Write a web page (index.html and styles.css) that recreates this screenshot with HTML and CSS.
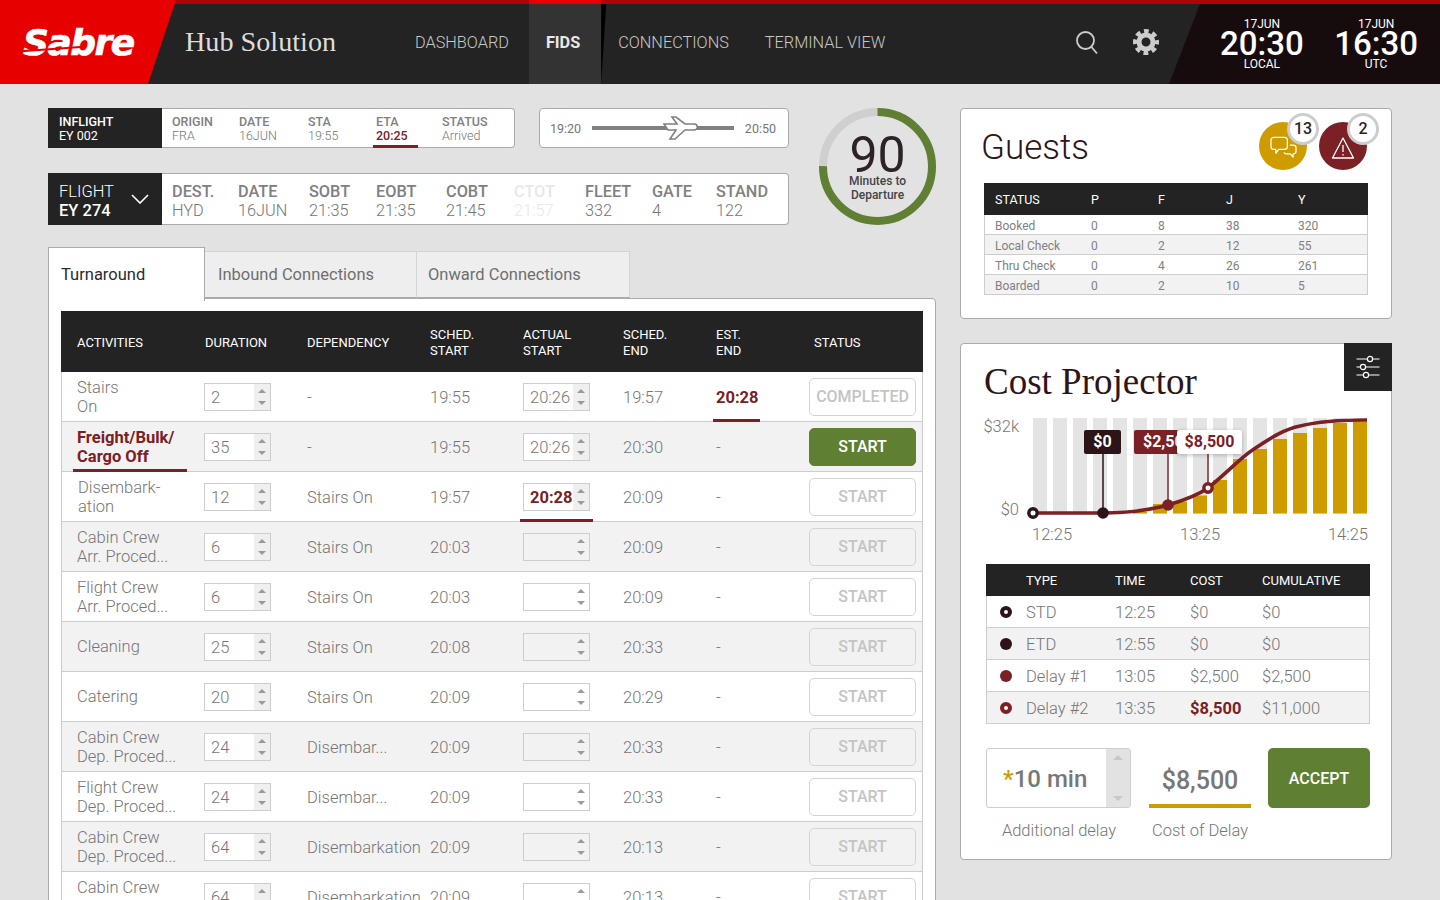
FILE: index.html
```html
<!DOCTYPE html>
<html lang="en">

<head>
    <meta charset="UTF-8">
    <meta name="viewport" content="width=device-width, initial-scale=1.0">
    <title>Hub Solution</title>
    <link rel="stylesheet" href="styles.css">
</head>

<body>
    <header class="topbar">
        <div class="logo"><span class="logo-text">Sabre</span></div>
        <div class="app-title">Hub Solution</div>
        <nav class="nav">
            <a class="nav-item">DASHBOARD</a>
            <a class="nav-item active">FIDS</a>
            <a class="nav-item">CONNECTIONS</a>
            <a class="nav-item">TERMINAL VIEW</a>
        </nav>
        <div class="tools">
            <svg class="icon-search" viewBox="0 0 26 26" width="26" height="26" fill="none" stroke="#ccc" stroke-width="1.8">
                <circle cx="11.5" cy="11.5" r="8.5"></circle>
                <path d="M17.5 18 L23 24.5"></path>
            </svg>
            <svg class="icon-gear" viewBox="0 0 26 26" width="26" height="26" fill="none" stroke="#ccc">
                <circle cx="13" cy="13" r="7" stroke-width="5"></circle>
                <circle cx="13" cy="13" r="10.5" stroke-width="5" stroke-dasharray="4.6 3.65" stroke-dashoffset="2.3"></circle>
            </svg>
        </div>
        <div class="clocks">
            <div class="clock"><span>17JUN</span><strong>20:30</strong><span>LOCAL</span></div>
            <div class="clock"><span>17JUN</span><strong>16:30</strong><span>UTC</span></div>
        </div>
    </header>

    <main class="page">
        <section class="left">
            <div class="summary">
                <div class="flights">
                    <div class="flight-line">
                        <div class="flight-card small">
                            <div class="flight-id"><b>INFLIGHT</b><span>EY 002</span></div>
                            <div class="fields inbound">
                                <div><b>ORIGIN</b><span>FRA</span></div>
                                <div><b>DATE</b><span>16JUN</span></div>
                                <div><b>STA</b><span>19:55</span></div>
                                <div class="marked"><b>ETA</b><span>20:25</span></div>
                                <div><b>STATUS</b><span>Arrived</span></div>
                            </div>
                        </div>
                        <div class="timeline">
                            <span>19:20</span>
                            <div class="track">
                                <svg class="plane" viewBox="0 0 36 24" width="36" height="24" fill="#fff" stroke="#808080" stroke-width="1.6">
                                    <path d="M1 8 H14 L9 1 H13 L22 8 H31 C35.5 8 35.5 14 31 14 H22 L12 23 H7 L13 14 H5 Z"></path>
                                </svg>
                            </div>
                            <span>20:50</span>
                        </div>
                    </div>
                    <div class="flight-card big">
                        <div class="flight-id">
                            <div><span>FLIGHT</span><b>EY 274</b></div>
                            <svg viewBox="0 0 18 10" width="18" height="10" fill="none" stroke="#fff" stroke-width="1.6">
                                <path d="M1 1 L9 9 L17 1"></path>
                            </svg>
                        </div>
                        <div class="fields outbound">
                            <div><b>DEST.</b><span>HYD</span></div>
                            <div><b>DATE</b><span>16JUN</span></div>
                            <div><b>SOBT</b><span>21:35</span></div>
                            <div><b>EOBT</b><span>21:35</span></div>
                            <div><b>COBT</b><span>21:45</span></div>
                            <div class="faded"><b>CTOT</b><span>21:57</span></div>
                            <div><b>FLEET</b><span>332</span></div>
                            <div><b>GATE</b><span>4</span></div>
                            <div><b>STAND</b><span>122</span></div>
                        </div>
                    </div>
                </div>
                <div class="gauge">
                    <svg viewBox="0 0 117 117" width="117" height="117" fill="none" stroke-width="8">
                        <circle cx="58.5" cy="58.5" r="54.5" stroke="#cfcfcf"></circle>
                        <circle cx="58.5" cy="58.5" r="54.5" stroke="#5f7f33" stroke-dasharray="256.8 342.4" transform="rotate(-90 58.5 58.5)"></circle>
                    </svg>
                    <div class="gauge-text">
                        <strong>90</strong>
                        <span>Minutes to<br>Departure</span>
                    </div>
                </div>
            </div>

            <div class="tabs">
                <div class="tab active">Turnaround</div>
                <div class="tab">Inbound Connections</div>
                <div class="tab">Onward Connections</div>
            </div>

            <div class="tab-panel">
                <table class="activities">
                    <colgroup>
                        <col class="c-name">
                        <col class="c-dur">
                        <col class="c-dep">
                        <col class="c-sched">
                        <col class="c-act">
                        <col class="c-end">
                        <col class="c-est">
                        <col class="c-status">
                    </colgroup>
                    <thead>
                        <tr>
                            <th class="first">ACTIVITIES</th>
                            <th>DURATION</th>
                            <th>DEPENDENCY</th>
                            <th>SCHED.<br>START</th>
                            <th>ACTUAL<br>START</th>
                            <th>SCHED.<br>END</th>
                            <th>EST.<br>END</th>
                            <th class="last">STATUS</th>
                        </tr>
                    </thead>
                    <tbody>
                        <tr>
                            <td class="first">Stairs<br>On</td>
                            <td><div class="spin"><span>2</span><i></i></div></td>
                            <td>-</td>
                            <td>19:55</td>
                            <td><div class="spin"><span>20:26</span><i></i></div></td>
                            <td>19:57</td>
                            <td class="late underline-est">20:28</td>
                            <td><button class="btn">COMPLETED</button></td>
                        </tr>
                        <tr>
                            <td class="first late underline-name">Freight/Bulk/<br>Cargo Off</td>
                            <td><div class="spin"><span>35</span><i></i></div></td>
                            <td>-</td>
                            <td>19:55</td>
                            <td><div class="spin"><span>20:26</span><i></i></div></td>
                            <td>20:30</td>
                            <td>-</td>
                            <td><button class="btn go">START</button></td>
                        </tr>
                        <tr>
                            <td class="first nudge">Disembark-<br>ation</td>
                            <td><div class="spin"><span>12</span><i></i></div></td>
                            <td>Stairs On</td>
                            <td>19:57</td>
                            <td class="underline-act"><div class="spin"><span class="late">20:28</span><i></i></div></td>
                            <td>20:09</td>
                            <td>-</td>
                            <td><button class="btn">START</button></td>
                        </tr>
                        <tr>
                            <td class="first">Cabin Crew<br>Arr. Proced...</td>
                            <td><div class="spin"><span>6</span><i></i></div></td>
                            <td>Stairs On</td>
                            <td>20:03</td>
                            <td><div class="spin empty"><span></span><i></i></div></td>
                            <td>20:09</td>
                            <td>-</td>
                            <td><button class="btn">START</button></td>
                        </tr>
                        <tr>
                            <td class="first">Flight Crew<br>Arr. Proced...</td>
                            <td><div class="spin"><span>6</span><i></i></div></td>
                            <td>Stairs On</td>
                            <td>20:03</td>
                            <td><div class="spin empty"><span></span><i></i></div></td>
                            <td>20:09</td>
                            <td>-</td>
                            <td><button class="btn">START</button></td>
                        </tr>
                        <tr>
                            <td class="first">Cleaning</td>
                            <td><div class="spin"><span>25</span><i></i></div></td>
                            <td>Stairs On</td>
                            <td>20:08</td>
                            <td><div class="spin empty"><span></span><i></i></div></td>
                            <td>20:33</td>
                            <td>-</td>
                            <td><button class="btn">START</button></td>
                        </tr>
                        <tr>
                            <td class="first">Catering</td>
                            <td><div class="spin"><span>20</span><i></i></div></td>
                            <td>Stairs On</td>
                            <td>20:09</td>
                            <td><div class="spin empty"><span></span><i></i></div></td>
                            <td>20:29</td>
                            <td>-</td>
                            <td><button class="btn">START</button></td>
                        </tr>
                        <tr>
                            <td class="first">Cabin Crew<br>Dep. Proced...</td>
                            <td><div class="spin"><span>24</span><i></i></div></td>
                            <td>Disembar...</td>
                            <td>20:09</td>
                            <td><div class="spin empty"><span></span><i></i></div></td>
                            <td>20:33</td>
                            <td>-</td>
                            <td><button class="btn">START</button></td>
                        </tr>
                        <tr>
                            <td class="first">Flight Crew<br>Dep. Proced...</td>
                            <td><div class="spin"><span>24</span><i></i></div></td>
                            <td>Disembar...</td>
                            <td>20:09</td>
                            <td><div class="spin empty"><span></span><i></i></div></td>
                            <td>20:33</td>
                            <td>-</td>
                            <td><button class="btn">START</button></td>
                        </tr>
                        <tr>
                            <td class="first">Cabin Crew<br>Dep. Proced...</td>
                            <td><div class="spin"><span>64</span><i></i></div></td>
                            <td>Disembarkation</td>
                            <td>20:09</td>
                            <td><div class="spin empty"><span></span><i></i></div></td>
                            <td>20:13</td>
                            <td>-</td>
                            <td><button class="btn">START</button></td>
                        </tr>
                        <tr>
                            <td class="first">Cabin Crew<br>Dep. Proced...</td>
                            <td><div class="spin"><span>64</span><i></i></div></td>
                            <td>Disembarkation</td>
                            <td>20:09</td>
                            <td><div class="spin empty"><span></span><i></i></div></td>
                            <td>20:13</td>
                            <td>-</td>
                            <td><button class="btn">START</button></td>
                        </tr>
                    </tbody>
                </table>
            </div>
        </section>

        <aside class="right">
            <section class="panel guests">
                <div class="guests-head">
                    <h2>Guests</h2>
                    <div class="alerts">
                        <div class="alert gold">
                            <svg viewBox="0 0 28 26" width="27" height="25" fill="none" stroke="#fff" stroke-width="1.3" stroke-linejoin="round">
                                <path d="M4 1.5 H15 Q18 1.5 18 4.5 V11 Q18 14 15 14 H9 L6 18 V14 H4 Q1 14 1 11 V4.5 Q1 1.5 4 1.5 Z"></path>
                                <path d="M20.5 9.5 H24 Q27 9.5 27 12 V16 Q27 18.5 24 18.5 V22 L21 18.5 H17 Q15 18.5 14.5 17"></path>
                            </svg>
                            <span class="count">13</span>
                        </div>
                        <div class="alert red">
                            <svg viewBox="0 0 24 24" width="24" height="24" fill="none" stroke="#fff" stroke-width="1.3" stroke-linejoin="round">
                                <path d="M12 2 L22.5 22 H1.5 Z"></path>
                                <path d="M12 9 V16 M12 18 V19.5"></path>
                            </svg>
                            <span class="count">2</span>
                        </div>
                    </div>
                </div>
                <table class="guest-table">
                    <thead>
                        <tr><th>STATUS</th><th>P</th><th>F</th><th>J</th><th>Y</th></tr>
                    </thead>
                    <tbody>
                        <tr><td>Booked</td><td>0</td><td>8</td><td>38</td><td>320</td></tr>
                        <tr><td>Local Check</td><td>0</td><td>2</td><td>12</td><td>55</td></tr>
                        <tr><td>Thru Check</td><td>0</td><td>4</td><td>26</td><td>261</td></tr>
                        <tr><td>Boarded</td><td>0</td><td>2</td><td>10</td><td>5</td></tr>
                    </tbody>
                </table>
            </section>

            <section class="panel cost">
                <h2 class="cost-title">Cost Projector</h2>
                <div class="filter-btn">
                    <svg viewBox="0 0 24 24" width="24" height="24" fill="#222" stroke="#fff" stroke-width="1.2">
                        <path d="M0.5 4 H23.5 M0.5 12 H23.5 M0.5 20 H23.5"></path>
                        <circle cx="14" cy="4" r="2.6"></circle>
                        <circle cx="7" cy="12" r="2.6"></circle>
                        <circle cx="10" cy="20" r="2.6"></circle>
                    </svg>
                </div>
                <svg class="chart" viewBox="961 410 430 140" width="430" height="140">
                    <g fill="#e4e4e4">
                        <rect x="1033" y="418" width="14" height="95.5"></rect>
                        <rect x="1053" y="418" width="14" height="95.5"></rect>
                        <rect x="1073" y="418" width="14" height="95.5"></rect>
                        <rect x="1093" y="418" width="14" height="95.5"></rect>
                        <rect x="1113" y="418" width="14" height="95.5"></rect>
                        <rect x="1133" y="418" width="14" height="95.5"></rect>
                        <rect x="1153" y="418" width="14" height="95.5"></rect>
                        <rect x="1173" y="418" width="14" height="95.5"></rect>
                        <rect x="1193" y="418" width="14" height="95.5"></rect>
                        <rect x="1213" y="418" width="14" height="95.5"></rect>
                        <rect x="1233" y="418" width="14" height="95.5"></rect>
                        <rect x="1253" y="418" width="14" height="95.5"></rect>
                        <rect x="1273" y="418" width="14" height="95.5"></rect>
                        <rect x="1293" y="418" width="14" height="95.5"></rect>
                        <rect x="1313" y="418" width="14" height="95.5"></rect>
                        <rect x="1333" y="418" width="14" height="95.5"></rect>
                        <rect x="1353" y="418" width="14" height="95.5"></rect>
                    </g>
                    <g fill="#cf9c00">
                        <rect x="1133" y="512" width="14" height="1.5"></rect>
                        <rect x="1153" y="504" width="14" height="9.5"></rect>
                        <rect x="1173" y="501.5" width="14" height="12"></rect>
                        <rect x="1193" y="495.5" width="14" height="18"></rect>
                        <rect x="1213" y="480" width="14" height="33.5"></rect>
                        <rect x="1233" y="459" width="14" height="54.5"></rect>
                        <rect x="1253" y="449" width="14" height="65"></rect>
                        <rect x="1273" y="439" width="14" height="74.5"></rect>
                        <rect x="1293" y="433" width="14" height="80.5"></rect>
                        <rect x="1313" y="428" width="14" height="85.5"></rect>
                        <rect x="1333" y="423" width="14" height="90.5"></rect>
                        <rect x="1353" y="422" width="14" height="91.5"></rect>
                    </g>
                    <path d="M1033 513 H1103 C1130 513 1150 510 1168 505 C1185 500 1198 495 1208 488 C1228 472 1240 458 1254 449 C1272 437 1285 429 1300 426 C1320 421 1345 420 1367 420" fill="none" stroke="#7b2024" stroke-width="3.6"></path>
                    <path d="M1103 440 V513" stroke="#2d1419" stroke-width="1.5"></path>
                    <path d="M1168 440 V505" stroke="#7b2024" stroke-width="1.5"></path>
                    <path d="M1208 440 V488" stroke="#7b2024" stroke-width="1.5"></path>
                    <rect x="1084" y="430" width="37" height="24" rx="2" fill="#2d1419"></rect>
                    <text x="1102.5" y="447" class="tag" fill="#fff">$0</text>
                    <rect x="1134" y="430" width="60" height="24" rx="2" fill="#7b2024"></rect>
                    <text x="1143" y="447" class="tag-left" fill="#fff">$2,500</text>
                    <rect class="tag-shadow" x="1177" y="430" width="65" height="24" rx="2" fill="#fff"></rect>
                    <text x="1209.5" y="447" class="tag" fill="#7b2024">$8,500</text>
                    <circle cx="1033" cy="513" r="4.2" fill="#fff" stroke="#2d1419" stroke-width="3.4"></circle>
                    <circle cx="1103" cy="513" r="5.8" fill="#2d1419"></circle>
                    <circle cx="1168" cy="505" r="5.8" fill="#7b2024"></circle>
                    <circle cx="1208" cy="488" r="4.2" fill="#fff" stroke="#7b2024" stroke-width="3.4"></circle>
                    <text x="1019" y="432" class="axis end">$32k</text>
                    <text x="1019" y="515" class="axis end">$0</text>
                    <text x="1032" y="540" class="axis">12:25</text>
                    <text x="1180" y="540" class="axis">13:25</text>
                    <text x="1368" y="540" class="axis end">14:25</text>
                </svg>
                <table class="cost-table">
                    <thead>
                        <tr><th></th><th>TYPE</th><th>TIME</th><th>COST</th><th>CUMULATIVE</th></tr>
                    </thead>
                    <tbody>
                        <tr><td><span class="dot dark open"></span></td><td>STD</td><td>12:25</td><td>$0</td><td>$0</td></tr>
                        <tr><td><span class="dot dark"></span></td><td>ETD</td><td>12:55</td><td>$0</td><td>$0</td></tr>
                        <tr><td><span class="dot wine"></span></td><td>Delay #1</td><td>13:05</td><td>$2,500</td><td>$2,500</td></tr>
                        <tr><td><span class="dot wine open"></span></td><td>Delay #2</td><td>13:35</td><td class="late">$8,500</td><td>$11,000</td></tr>
                    </tbody>
                </table>
                <div class="delay-form">
                    <div class="delay-input">
                        <div class="delay-value"><em>*</em>10 min</div>
                        <div class="delay-spin"></div>
                    </div>
                    <div class="delay-cost">$8,500</div>
                    <button class="accept">ACCEPT</button>
                    <div class="delay-label">Additional delay</div>
                    <div class="delay-label">Cost of Delay</div>
                </div>
            </section>
        </aside>
    </main>
</body>

</html>
```

FILE: styles.css
```css
* {
    box-sizing: border-box;
}

html,
body {
    height: 900px;
    overflow: hidden;
}

body {
    margin: 0;
    background-color: #e2e2e2;
    font-family: Roboto, "Liberation Sans", sans-serif;
    font-weight: 300;
    color: #757575;
}

/* header */
.topbar {
    display: flex;
    height: 84px;
    background-color: #232323;
    box-shadow: inset 0 4px 0 #ad0505;
}

.logo {
    display: flex;
    align-items: center;
    width: 176px;
    padding-left: 23px;
    background-color: #e60000;
    clip-path: polygon(0 0, 100% 0, 148px 100%, 0 100%);
}

.logo-text {
    position: relative;
    font-family: "DejaVu Sans", sans-serif;
    font-size: 36px;
    font-weight: 700;
    font-style: italic;
    letter-spacing: -1.5px;
    color: #fff;
    -webkit-text-stroke: 0.7px #fff;
}

.logo-text::after {
    content: "";
    position: absolute;
    left: -2px;
    right: 50px;
    top: 26px;
    height: 2px;
    background-color: #e60000;
    transform: rotate(-4deg);
}

.app-title {
    align-self: center;
    margin-left: 9px;
    width: 212px;
    font-family: "Liberation Serif", serif;
    font-size: 28.2px;
    color: #ddd;
    white-space: nowrap;
}

.nav {
    display: flex;
}

.nav-item {
    position: relative;
    display: flex;
    align-items: center;
    padding: 0 18px;
    font-size: 16.3px;
    color: #c8c8c8;
}

.nav-item:first-child {
    padding-right: 19px;
}

.nav-item.active {
    margin-left: 1px;
    padding: 0 21px 0 17px;
    font-weight: 700;
    color: #e8e8e8;
    background-color: #333;
    box-shadow: inset 0 4px 0 #e60000;
}

.nav-item.active + .nav-item {
    padding-left: 17px;
}

.nav-item.active::after {
    content: "";
    position: absolute;
    left: 100%;
    top: 4px;
    width: 5px;
    height: 80px;
    background-color: #000;
    clip-path: polygon(0 0, 100% 0, 0 100%);
}

.tools {
    display: flex;
    align-items: center;
    gap: 33px;
    margin-left: auto;
    padding-right: 10px;
}

.icon-search,
.icon-gear {
    display: block;
}

.clocks {
    display: flex;
    justify-content: space-between;
    width: 271px;
    margin-top: 4px;
    padding: 0 22px 0 51px;
    background-color: #160c0d;
    clip-path: polygon(31px 0, 100% 0, 100% 100%, 0 100%);
}

.clock {
    display: flex;
    flex-direction: column;
    align-items: center;
    padding-top: 13px;
    color: #fff;
    font-size: 12px;
    font-weight: 400;
    line-height: 14px;
}

.clock strong {
    font-size: 33px;
    font-weight: 500;
    line-height: 26px;
}

/* page */
.page {
    display: flex;
    gap: 24px;
    padding: 24px 48px 0;
}

.left {
    width: 888px;
}

.right {
    width: 432px;
}

.summary {
    display: flex;
    gap: 30px;
}

.flights {
    display: flex;
    flex-direction: column;
    gap: 25px;
    width: 741px;
}

.flight-line {
    display: flex;
    gap: 24px;
}

.flight-card {
    display: flex;
    background-color: #fff;
    border: 1px solid #aaa;
    border-left: none;
    border-radius: 0 4px 4px 0;
}

.flight-card.small {
    width: 467px;
    height: 40px;
}

.flight-card.big {
    width: 741px;
    height: 52px;
}

.flight-id {
    flex: none;
    width: 114px;
    margin: -1px 0;
    background-color: #232323;
    color: #fff;
}

.small .flight-id {
    display: flex;
    flex-direction: column;
    justify-content: center;
    padding: 2px 0 0 11px;
    font-size: 12.5px;
    line-height: 14px;
    font-weight: 400;
}

.small .flight-id b {
    font-weight: 500;
}

.big .flight-id {
    display: flex;
    align-items: center;
    justify-content: space-between;
    padding: 4px 13px 0 11px;
    font-size: 16.5px;
    line-height: 19px;
}

.big .flight-id svg {
    margin-top: -4px;
}

.big .flight-id div {
    display: flex;
    flex-direction: column;
}

.big .flight-id b {
    font-weight: 500;
}

.fields {
    display: grid;
    align-items: center;
    padding-left: 10px;
}

.fields > div {
    display: flex;
    flex-direction: column;
}

.fields b {
    font-weight: 500;
    color: #808080;
}

.inbound {
    grid-template-columns: 67px 69px 68px 66px auto;
    padding-top: 2px;
    font-size: 12.5px;
    line-height: 14px;
}

.outbound {
    grid-template-columns: 66px 71px 67px 70px 68px 71px 67px 64px auto;
    padding-top: 4px;
    font-size: 16.3px;
    line-height: 19px;
}

.marked {
    position: relative;
}

.marked span {
    font-weight: 500;
    color: #7b2024;
}

.marked::after {
    content: "";
    position: absolute;
    left: -3px;
    bottom: -5px;
    width: 45px;
    height: 3px;
    background-color: #7b2024;
}

.faded b,
.faded span {
    color: #e8e8e8;
}

.timeline {
    display: flex;
    align-items: center;
    gap: 11px;
    width: 250px;
    height: 40px;
    padding: 0 12px 0 10px;
    background-color: #fff;
    border: 1px solid #aaa;
    border-radius: 4px;
    font-size: 12.5px;
    font-weight: 400;
}

.track {
    position: relative;
    flex: 1;
    height: 4px;
    background-color: #808080;
}

.plane {
    position: absolute;
    left: 71px;
    top: -10px;
}

/* gauge */
.gauge {
    position: relative;
    width: 117px;
    height: 117px;
}

.gauge svg {
    display: block;
}

.gauge-text {
    position: absolute;
    inset: 0;
    display: flex;
    flex-direction: column;
    align-items: center;
    padding-top: 27px;
    text-align: center;
    color: #2d2326;
}

.gauge-text strong {
    font-size: 50px;
    font-weight: 400;
    line-height: 40px;
}

.gauge-text span {
    margin-top: -1px;
    font-size: 12px;
    font-weight: 500;
    line-height: 14px;
    color: #444;
}

/* tabs */
.tabs {
    position: relative;
    display: flex;
    align-items: flex-start;
    height: 51px;
    margin-top: 22px;
    z-index: 1;
}

.tab {
    display: flex;
    align-items: center;
    height: 47px;
    margin-top: 4px;
    padding-left: 13px;
    background-color: #eee;
    border: 1px solid #d4d4d4;
    border-left: none;
    border-bottom: 1px solid #aaa;
    font-size: 16.5px;
    font-weight: 400;
    color: #6e6e6e;
}

.tab:nth-child(2) {
    width: 212px;
}

.tab:nth-child(3) {
    width: 213px;
    padding-left: 11px;
}

.tab.active {
    width: 157px;
    height: 54px;
    margin-top: 0;
    padding-left: 12px;
    background-color: #fff;
    border: 1px solid #aaa;
    border-bottom: none;
    color: #2b2b2b;
}

.tab-panel {
    height: 650px;
    padding: 12px;
    background-color: #fff;
    border: 1px solid #aaa;
    border-radius: 0 4px 0 0;
}

/* activities table */
.activities {
    width: 862px;
    table-layout: fixed;
    border-collapse: separate;
    border-spacing: 0;
    font-size: 16.5px;
}

.c-name { width: 144px; }
.c-dur { width: 102px; }
.c-dep { width: 123px; }
.c-sched { width: 93px; }
.c-act { width: 100px; }
.c-end { width: 93px; }
.c-est { width: 93px; }
.c-status { width: 114px; }

.activities th {
    height: 61px;
    padding: 2px 0 0;
    background-color: #232323;
    color: #fff;
    font-size: 13px;
    font-weight: 400;
    line-height: 16px;
    text-align: left;
}

.activities th.first {
    padding-left: 16px;
}

.activities th.last {
    padding-left: 5px;
}

.activities td {
    position: relative;
    height: 50px;
    padding: 0;
    border-bottom: 1px solid #cdcdcd;
    line-height: 19px;
    white-space: nowrap;
}

.activities td:nth-child(3),
.activities td:nth-child(4),
.activities td:nth-child(6),
.activities td:nth-child(7) {
    padding-top: 2px;
}

.activities tbody tr:nth-child(even) {
    background-color: #f2f2f2;
}

.activities td:first-child {
    padding-left: 15px;
    border-left: 1px solid #cdcdcd;
}

.activities td:last-child {
    border-right: 1px solid #cdcdcd;
}

.activities td.nudge {
    padding-left: 16px;
}

.late {
    font-weight: 700;
    color: #7b2024;
}

.underline-name::after,
.underline-est::after,
.underline-act::after {
    content: "";
    position: absolute;
    bottom: -1px;
    height: 3px;
    background-color: #7b2024;
}

.underline-name::after {
    left: 11px;
    width: 114px;
}

.underline-est::after {
    left: -3px;
    width: 47px;
}

.underline-act::after {
    left: -3px;
    width: 73px;
}

.spin {
    display: flex;
    width: 67px;
    height: 28px;
    background-color: #fff;
    border: 1px solid #cdcdcd;
    line-height: 27px;
}

.activities td:nth-child(2) .spin {
    margin-left: -1px;
}

.spin span {
    flex: 1;
    padding-left: 6px;
}

.spin i {
    display: block;
    position: relative;
    width: 16px;
    background-color: #efefef;
}

.spin i::before,
.spin i::after {
    content: "";
    position: absolute;
    left: 4px;
    border-left: 4px solid transparent;
    border-right: 4px solid transparent;
}

.spin i::before {
    top: 5px;
    border-bottom: 4px solid #9a9a9a;
}

.spin i::after {
    bottom: 5px;
    border-top: 4px solid #9a9a9a;
}

.spin.empty i {
    background: none;
}

tr:nth-child(even) .spin.empty {
    background: none;
}

.btn {
    display: block;
    width: 107px;
    height: 38px;
    padding: 0;
    background: none;
    border: 1px solid #d4d4d4;
    border-radius: 5px;
    font-family: Roboto, "Liberation Sans", sans-serif;
    font-size: 16px;
    font-weight: 500;
    color: #c4c4c4;
}

.btn.go {
    background-color: #5f7f33;
    border-color: #5f7f33;
    color: #fff;
}

/* right side */
.panel {
    position: relative;
    background-color: #fff;
    border: 1px solid #aaa;
    border-radius: 4px;
}

.guests {
    height: 211px;
    margin-bottom: 24px;
    padding: 13px 23px 0;
}

.guests-head {
    display: flex;
    justify-content: space-between;
    height: 61px;
}

.guests-head h2 {
    margin: 5px 0 0 -3px;
    font-size: 35px;
    font-weight: 300;
    line-height: 42px;
    color: #2d1419;
}

.alerts {
    display: flex;
    gap: 12px;
    margin-right: 1px;
}

.alert {
    position: relative;
    display: flex;
    align-items: center;
    justify-content: center;
    width: 48px;
    height: 48px;
    border-radius: 50%;
}

.alert.gold {
    background-color: #cf9c00;
}

.alert.red {
    background-color: #7b2024;
}

.alert svg {
    margin-top: 4px;
}

.count {
    position: absolute;
    right: -12px;
    top: -9px;
    width: 32px;
    height: 32px;
    background-color: #fff;
    border: 3px solid #cdcdcd;
    border-radius: 50%;
    font-size: 16px;
    font-weight: 500;
    line-height: 26px;
    text-align: center;
    color: #2d2326;
}

.guest-table {
    width: 384px;
    table-layout: fixed;
    border-collapse: separate;
    border-spacing: 0;
    font-size: 12px;
    font-weight: 400;
}

.guest-table th {
    height: 32px;
    padding: 0;
    background-color: #232323;
    color: #fff;
    font-size: 12.5px;
    font-weight: 400;
    text-align: left;
}

.guest-table th:first-child {
    width: 107px;
    padding-left: 11px;
}

.guest-table th:nth-child(2) { width: 67px; }
.guest-table th:nth-child(3) { width: 68px; }
.guest-table th:nth-child(4) { width: 72px; }

.guest-table td {
    height: 20px;
    padding: 2px 0 0;
    border-bottom: 1px solid #cdcdcd;
    color: #808080;
}

.guest-table td:first-child {
    padding-left: 10px;
    border-left: 1px solid #cdcdcd;
}

.guest-table td:last-child {
    border-right: 1px solid #cdcdcd;
}

.guest-table tbody tr:nth-child(even) {
    background-color: #f2f2f2;
}

.cost {
    height: 517px;
}

.cost-title {
    height: 66px;
    margin: 0;
    padding: 16px 0 0 23px;
    font-family: "Liberation Serif", serif;
    font-size: 37px;
    font-weight: 400;
    line-height: 44px;
    color: #2d1419;
}

.filter-btn {
    position: absolute;
    right: -1px;
    top: -1px;
    display: flex;
    align-items: center;
    justify-content: center;
    width: 48px;
    height: 48px;
    background-color: #232323;
}

.chart {
    display: block;
    margin-bottom: 14px;
}

.chart text {
    font-family: Roboto, "Liberation Sans", sans-serif;
}

.axis {
    font-size: 16.5px;
    font-weight: 300;
    fill: #757575;
}

.axis.end {
    text-anchor: end;
}

.tag,
.tag-left {
    font-size: 16px;
    font-weight: 700;
}

.tag {
    text-anchor: middle;
}

.tag-shadow {
    filter: drop-shadow(0 1px 2px rgba(0, 0, 0, 0.25));
}

.cost-table {
    width: 384px;
    margin-left: 25px;
    table-layout: fixed;
    border-collapse: separate;
    border-spacing: 0;
    font-size: 16.5px;
}

.cost-table th {
    height: 32px;
    padding: 0;
    background-color: #232323;
    color: #fff;
    font-size: 13px;
    font-weight: 400;
    text-align: left;
}

.cost-table th:nth-child(1) { width: 40px; }
.cost-table th:nth-child(2) { width: 89px; }
.cost-table th:nth-child(3) { width: 75px; }
.cost-table th:nth-child(4) { width: 72px; }

.cost-table td {
    height: 32px;
    padding: 2px 0 0;
    border-bottom: 1px solid #cdcdcd;
}

.cost-table td:first-child {
    padding: 0 0 0 13px;
    border-left: 1px solid #cdcdcd;
}

.cost-table td:last-child {
    border-right: 1px solid #cdcdcd;
}

.cost-table tbody tr:nth-child(even) {
    background-color: #f2f2f2;
}

.dot {
    display: block;
    width: 12px;
    height: 12px;
    border-radius: 50%;
}

.dot.dark {
    background-color: #2d1419;
}

.dot.wine {
    background-color: #7b2024;
}

.dot.open {
    background-color: #fff;
    border: 4px solid #2d1419;
}

.dot.wine.open {
    border-color: #7b2024;
}

.delay-form {
    display: grid;
    grid-template-columns: 146px 102px 102px;
    column-gap: 17px;
    margin: 24px 0 0 25px;
}

.delay-input {
    display: flex;
    width: 145px;
    height: 60px;
    border: 1px solid #cdcdcd;
    border-radius: 3px;
}

.delay-value {
    flex: 1;
    padding-left: 16px;
    font-size: 24px;
    font-weight: 500;
    line-height: 60px;
    color: #777;
}

.delay-value em {
    font-style: normal;
    color: #cf9c00;
}

.delay-spin {
    position: relative;
    width: 24px;
    background-color: #e2e2e2;
}

.delay-spin::before,
.delay-spin::after {
    content: "";
    position: absolute;
    left: 7px;
    border-left: 5px solid transparent;
    border-right: 5px solid transparent;
}

.delay-spin::before {
    top: 6px;
    border-bottom: 5px solid #c8c8c8;
}

.delay-spin::after {
    bottom: 6px;
    border-top: 5px solid #c8c8c8;
}

.delay-cost {
    height: 60px;
    border-bottom: 4px solid #cf9c00;
    font-size: 25px;
    font-weight: 500;
    line-height: 65px;
    text-align: center;
    color: #777;
}

.accept {
    height: 60px;
    padding: 0;
    background-color: #5f7f33;
    border: none;
    border-radius: 5px;
    font-family: Roboto, "Liberation Sans", sans-serif;
    font-size: 16px;
    font-weight: 500;
    color: #fff;
}

.delay-label {
    margin-top: 13px;
    font-size: 16.5px;
    line-height: 20px;
    text-align: center;
    white-space: nowrap;
}
```
